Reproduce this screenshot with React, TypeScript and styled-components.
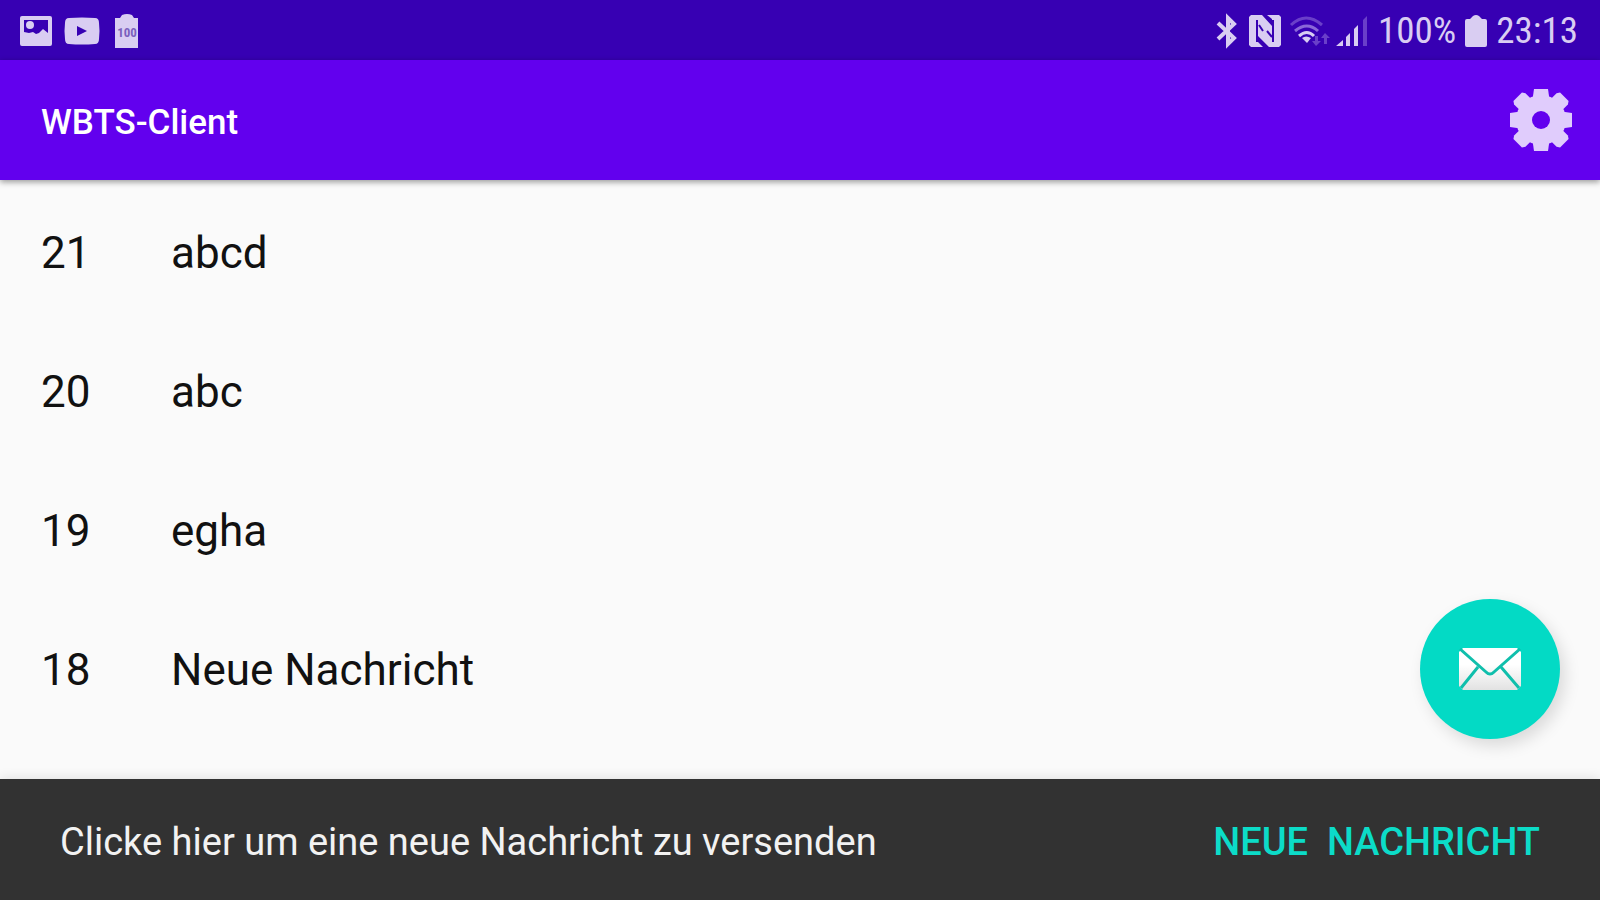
import React from 'react';
import styled, { createGlobalStyle } from 'styled-components';

const GlobalStyle = createGlobalStyle`
  *, *::before, *::after { box-sizing: border-box; }
  body {
    margin: 0;
    background: #fafafa;
    font-family: Roboto, "Liberation Sans", sans-serif;
  }
`;

const Screen = styled.div`
  display: flex;
  flex-direction: column;
  min-height: 100vh;
  background: #fafafa;
`;

const StatusBar = styled.div`
  display: flex;
  align-items: center;
  justify-content: space-between;
  height: 60px;
  padding: 2px 22px 0 20px;
  background: #3700b3;
  color: #d9cdf2;
`;

const StatusGroup = styled.div<{ $gap: number }>`
  display: flex;
  align-items: center;
  gap: ${({ $gap }) => $gap}px;

  svg { display: block; flex: none; overflow: visible; }
`;

const StatusText = styled.span`
  font-family: "Roboto Condensed", Roboto, sans-serif;
  font-size: 37px;
  line-height: 40px;
`;

const BatteryLevel = styled.text`
  font-family: "Roboto Condensed", Roboto, sans-serif;
  font-size: 13px;
  font-weight: 700;
  text-anchor: middle;
  fill: #7b60bd;
`;

const AppBar = styled.header`
  position: relative;
  display: flex;
  align-items: center;
  justify-content: space-between;
  height: 120px;
  padding: 0 28px 0 41px;
  background: #6200ee;
  box-shadow: 0 2px 6px rgba(0, 0, 0, 0.4);
`;

const Title = styled.h1`
  margin: 0;
  padding-top: 5px;
  color: #fff;
  font-size: 35px;
  font-weight: 500;
  line-height: 48px;
`;

const IconButton = styled.button`
  display: flex;
  padding: 0;
  border: 0;
  background: none;
  color: #e0ccfc;
  cursor: pointer;
`;

const Content = styled.main`
  position: relative;
  flex: 1;
`;

const MessageList = styled.ul`
  margin: 0;
  padding: 3px 0 0;
  list-style: none;
`;

const MessageRow = styled.li`
  display: flex;
  align-items: center;
  height: 139px;
  padding: 0 41px;
  color: #111;
  font-size: 44px;
  line-height: 56px;
`;

const MessageId = styled.span`
  flex: 0 0 130px;
`;

const Fab = styled.button`
  position: absolute;
  right: 40px;
  bottom: 40px;
  display: flex;
  align-items: center;
  justify-content: center;
  width: 140px;
  height: 140px;
  padding: 0;
  border: 0;
  border-radius: 50%;
  background: #03dac5;
  box-shadow: 5px 7px 16px rgba(0, 0, 0, 0.13);
  cursor: pointer;
`;

const Snackbar = styled.div`
  position: relative;
  display: flex;
  align-items: center;
  justify-content: space-between;
  height: 121px;
  padding: 4px 60px 0;
  background: #323232;
  color: #f2f2f2;
  font-size: 38px;
  line-height: 48px;
  box-shadow: 0 0 12px rgba(0, 0, 0, 0.12);
`;

const SnackbarAction = styled.button`
  padding: 0;
  border: 0;
  background: none;
  color: #0cdcc8;
  font: inherit;
  font-weight: 500;
  text-transform: uppercase;
  white-space: pre;
  cursor: pointer;
`;

const PictureIcon = () => (
  <svg width="32" height="30" viewBox="0 0 32 30" aria-hidden="true">
    <path
      fill="currentColor"
      fillRule="evenodd"
      d="M2 0h28a2 2 0 0 1 2 2v26a2 2 0 0 1-2 2H2a2 2 0 0 1-2-2V2a2 2 0 0 1 2-2ZM4 4v12l5 1 4-1 3 2 3-1 4-4 5 4V4Z"
    />
    <circle cx="10" cy="9" r="4" fill="currentColor" />
  </svg>
);

const VideoIcon = () => (
  <svg width="36" height="28" viewBox="0 0 36 28" aria-hidden="true">
    <path
      fill="currentColor"
      fillRule="evenodd"
      d="M5 1Q18 0 31 1q4 0 4 5 1 8 0 16 0 5-4 5-13 1-26 0-4 0-4-5-1-8 0-16 0-5 4-5ZM13 9v10l10-5Z"
    />
  </svg>
);

const BatteryInfoIcon = () => (
  <svg width="27" height="34" viewBox="-3 0 27 34" aria-hidden="true">
    <path fill="currentColor" d="M0 4h5l2-3q5-2 10 0l2 3h4v30H0Z" />
    <BatteryLevel x="12" y="23">
      100
    </BatteryLevel>
  </svg>
);

const BluetoothIcon = () => (
  <svg width="23" height="34" viewBox="0 0 23 34" aria-hidden="true">
    <path fill="none" stroke="currentColor" strokeWidth="4" d="M1 9l16 15-6 6V4l6 6L1 25" />
  </svg>
);

const NfcIcon = () => (
  <svg width="32" height="32" viewBox="0 0 32 32" aria-hidden="true">
    <path
      fill="currentColor"
      d="M2 0h11l10 11V4l-5-4h12l2 2v28l-2 2H20L9 21v6l5 5H2l-2-2V2Z"
    />
    <path fill="none" stroke="#3700b3" strokeWidth="2" d="M8 5v22M24 5v22M10 10l4 6M18 16l5 6" />
  </svg>
);

const WifiIcon = () => (
  <svg width="37" height="30" viewBox="0 0 37 30" aria-hidden="true">
    <g fill="none" strokeWidth="3">
      <path stroke="#6a3fc9" d="M1 9q15-14 31 0" />
      <path stroke="#8a68d8" d="M5 15q12-10 23 0" />
      <path stroke="currentColor" d="M9 20q8-7 15 0" />
    </g>
    <path fill="currentColor" d="M12 22q4-3 9 0l-4 5Z" />
    <path fill="#6a3fc9" d="M25 20h3v5h3l-5 5-4-5h3ZM34 28h3v-6h3l-5-5-4 5h3Z" />
  </svg>
);

const SignalIcon = () => (
  <svg width="33" height="32" viewBox="4 0 33 32" aria-hidden="true">
    <path fill="currentColor" d="M4 31l7-6v6ZM14 22l4-4v13h-4ZM22 14l4-4v21h-4Z" />
    <path fill="#6a3fc9" d="M31 5l4-4v30h-4Z" />
  </svg>
);

const BatteryIcon = () => (
  <svg width="22" height="32" viewBox="0 0 22 32" aria-hidden="true">
    <path fill="currentColor" d="M2 4h3l3-3q3-2 6 0l3 3h3q2 0 2 2v24q0 2-2 2H2q-2 0-2-2V6q0-2 2-2Z" />
  </svg>
);

const GearIcon = () => (
  <svg width="62" height="62" viewBox="-31 -31 62 62" aria-hidden="true">
    <mask id="gear-hole">
      <rect x="-31" y="-31" width="62" height="62" fill="#fff" />
      <circle r="9" fill="#000" />
    </mask>
    <g fill="currentColor" mask="url(#gear-hole)">
      <circle r="25" />
      {[0, 90].map((angle) => (
        <path
          key={angle}
          transform={`rotate(${angle})`}
          d="M-7-31H7L8-24V24L7 31H-7L-8 24V-24Z"
        />
      ))}
      {[45, 135].map((angle) => (
        <path
          key={angle}
          transform={`rotate(${angle})`}
          d="M-6-33H6L8-30V30L6 33H-6L-8 30V-30Z"
        />
      ))}
    </g>
  </svg>
);

const EnvelopeIcon = () => (
  <svg width="62" height="42" viewBox="0 0 62 42" aria-hidden="true">
    <defs>
      <linearGradient id="paper" x1="0" y1="0" x2="0" y2="1">
        <stop offset="0.4" stopColor="#fff" />
        <stop offset="1" stopColor="#e2e2e2" />
      </linearGradient>
    </defs>
    <path fill="url(#paper)" d="M4 0H58L62 4V38L58 42H4L0 38V4Z" />
    <path
      fill="none"
      stroke="#10bfac"
      strokeWidth="3"
      d="M1 1L27 24q4 4 8 0L61 1M19 19L2 40M42 19L60 40"
    />
  </svg>
);

const messages = [
  { id: 21, text: 'abcd' },
  { id: 20, text: 'abc' },
  { id: 19, text: 'egha' },
  { id: 18, text: 'Neue Nachricht' },
];

export default function App() {
  return (
    <Screen>
      <GlobalStyle />
      <StatusBar>
        <StatusGroup $gap={12}>
          <PictureIcon />
          <VideoIcon />
          <BatteryInfoIcon />
        </StatusGroup>
        <StatusGroup $gap={9}>
          <BluetoothIcon />
          <NfcIcon />
          <WifiIcon />
          <SignalIcon />
          <StatusText>100%</StatusText>
          <BatteryIcon />
          <StatusText>23:13</StatusText>
        </StatusGroup>
      </StatusBar>
      <AppBar>
        <Title>WBTS-Client</Title>
        <IconButton type="button" aria-label="Einstellungen">
          <GearIcon />
        </IconButton>
      </AppBar>
      <Content>
        <MessageList>
          {messages.map((message) => (
            <MessageRow key={message.id}>
              <MessageId>{message.id}</MessageId>
              <span>{message.text}</span>
            </MessageRow>
          ))}
        </MessageList>
        <Fab type="button" aria-label="Neue Nachricht">
          <EnvelopeIcon />
        </Fab>
      </Content>
      <Snackbar role="status">
        <span>Clicke hier um eine neue Nachricht zu versenden</span>
        <SnackbarAction type="button">{'Neue  Nachricht'}</SnackbarAction>
      </Snackbar>
    </Screen>
  );
}
